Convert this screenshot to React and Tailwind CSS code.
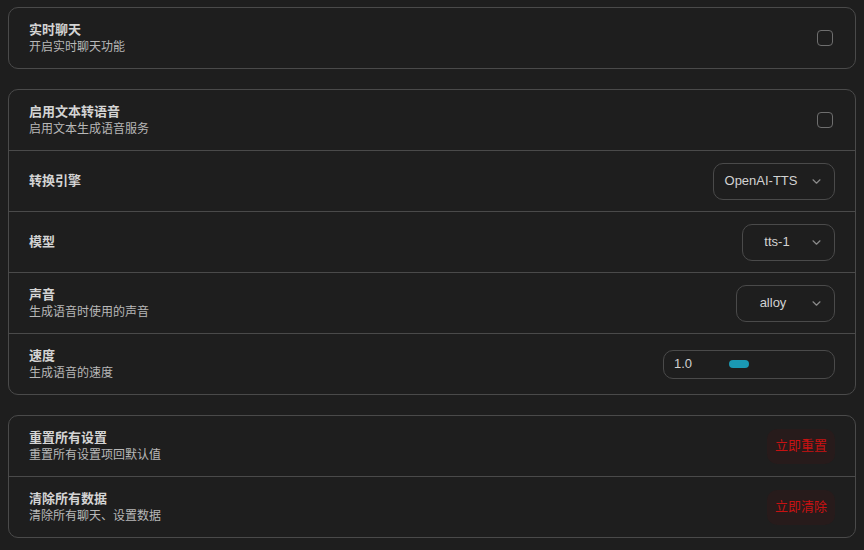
import React from 'react'

function Chevron() {
  return (
    <svg width="9" height="5" viewBox="0 0 9 5" fill="none" className="shrink-0">
      <path d="M1 0.8l3.5 3.4 3.5-3.4" stroke="#8a8a8a" strokeWidth="1.2" strokeLinecap="round" strokeLinejoin="round" />
    </svg>
  )
}

function Select({ value, width, textWidth }) {
  return (
    <div className={`flex h-[37px] items-center rounded-[10px] border border-[#4a4a4a] pl-[10px] pr-[13px] text-[13px] text-[#d2d2d2] ${width}`}>
      <span className={`text-center ${textWidth}`}>{value}</span>
      <span className="ml-auto"><Chevron /></span>
    </div>
  )
}

function Label({ title, desc }) {
  return (
    <div className="flex flex-col">
      <span className="text-[13px] font-bold leading-[18px] text-[#d4d4d4]">{title}</span>
      {desc && <span className="text-[12px] leading-[17px] text-[#b8b8b8]">{desc}</span>}
    </div>
  )
}

function Row({ title, desc, children, last }) {
  return (
    <div className={`flex items-center justify-between px-5 ${last ? 'h-[60px]' : 'h-[61px] border-b border-[#4a4a4a]'}`}>
      <Label title={title} desc={desc} />
      {children}
    </div>
  )
}

function Checkbox() {
  return <div className="mr-[2px] h-4 w-4 rounded-[4px] border-[1.5px] border-[#6e6e6e]" />
}

function DangerButton({ children }) {
  return (
    <button className="h-[35px] w-[68px] rounded-[10px] bg-[#271b1b] text-[13px] text-[#c81212]">
      {children}
    </button>
  )
}

export default function App() {
  return (
    <div
      className="min-h-screen bg-[#1e1e1e] px-2 pt-[7px] pb-6"
      style={{ fontFamily: '"Liberation Sans", "Noto Sans CJK SC", sans-serif' }}
    >
      <div className="flex flex-col gap-5">
        <div className="rounded-[10px] border border-[#4a4a4a]">
          <Row title="实时聊天" desc="开启实时聊天功能" last>
            <Checkbox />
          </Row>
        </div>

        <div className="rounded-[10px] border border-[#4a4a4a]">
          <Row title="启用文本转语音" desc="启用文本生成语音服务">
            <Checkbox />
          </Row>
          <Row title="转换引擎">
            <Select value="OpenAI-TTS" width="w-[122px]" textWidth="w-[74px]" />
          </Row>
          <Row title="模型">
            <Select value="tts-1" width="w-[93px]" textWidth="w-[48px]" />
          </Row>
          <Row title="声音" desc="生成语音时使用的声音">
            <Select value="alloy" width="w-[99px]" textWidth="w-[52px]" />
          </Row>
          <Row title="速度" desc="生成语音的速度" last>
            <div className="flex h-[29px] w-[172px] items-center rounded-[10px] border border-[#4a4a4a] pl-[10px] text-[13px] text-[#d2d2d2]">
              <span className="w-[55px]">1.0</span>
              <div className="h-2 w-5 rounded-full bg-[#1a98b3]" />
            </div>
          </Row>
        </div>

        <div className="rounded-[10px] border border-[#4a4a4a]">
          <Row title="重置所有设置" desc="重置所有设置项回默认值">
            <DangerButton>立即重置</DangerButton>
          </Row>
          <Row title="清除所有数据" desc="清除所有聊天、设置数据" last>
            <DangerButton>立即清除</DangerButton>
          </Row>
        </div>
      </div>
    </div>
  )
}
